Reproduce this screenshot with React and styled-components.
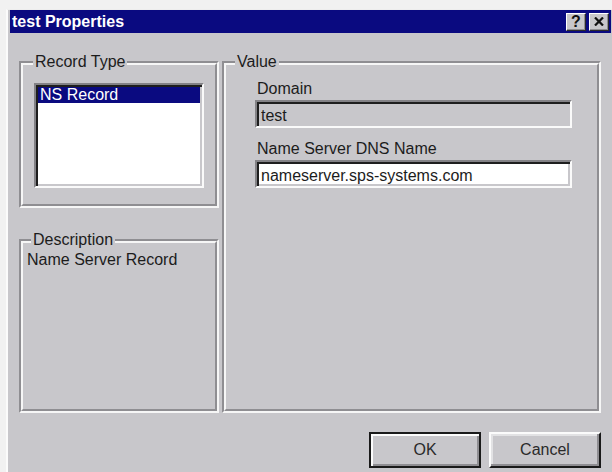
import React from "react";
import styled, { createGlobalStyle } from "styled-components";

const FACE = "#c8c7cb";
const SHADOW = "#8f8e92";
const LIGHT = "#f6f6f6";
const DARK = "#1c1c1c";
const NAVY = "#0a0a80";

const Global = createGlobalStyle`
  html, body {
    margin: 0;
    padding: 0;
    background: #f1f1f1;
    overflow: hidden;
  }
  body {
    font-family: "Liberation Sans", Arial, sans-serif;
    font-size: 16px;
    color: ${DARK};
  }
  * { box-sizing: border-box; }
`;

const Window = styled.div`
  margin: 9px 0 0 6px;
  width: 606px;
  height: 463px;
  background: ${FACE};
  border-top: 1px solid #ededed;
  border-left: 2px solid #fbfbfb;
  padding-left: 2px;
  display: flex;
  flex-direction: column;
`;

const TitleBar = styled.div`
  height: 23px;
  margin-right: 1px;
  background: ${NAVY};
  color: #fff;
  display: flex;
  align-items: center;
  padding: 0 2px 0 2px;
`;

const TitleText = styled.span`
  flex: 1;
  font-weight: bold;
  font-size: 16px;
  line-height: 18px;
  padding-top: 1px;
`;

const CaptionButton = styled.button`
  width: 20px;
  height: 18px;
  margin-left: ${(p) => (p.$gap ? "3px" : "0")};
  padding: 0;
  background: ${FACE};
  border: 1px solid;
  border-color: #fff #2a2a2a #2a2a2a #fff;
  box-shadow: inset -1px -1px 0 ${SHADOW};
  display: flex;
  align-items: center;
  justify-content: center;
  font-family: "Liberation Sans", Arial, sans-serif;
  font-weight: bold;
  font-size: 16px;
  color: #111;
  line-height: 1;
`;

const Body = styled.div`
  display: grid;
  grid-template-columns: 200px 379px;
  column-gap: 3px;
  row-gap: 19px;
  padding: 28px 0 0 9px;
`;

const Column = styled.div`
  display: flex;
  flex-direction: column;
  gap: 31px;
`;

const Group = styled.div`
  border: 2px solid;
  border-color: ${SHADOW} ${LIGHT} ${LIGHT} ${SHADOW};
  height: ${(p) => (p.$h ? `${p.$h}px` : "auto")};
  flex: ${(p) => (p.$grow ? 1 : "none")};
`;

const GroupInner = styled.div`
  height: 100%;
  border: 2px solid;
  border-color: ${LIGHT} ${SHADOW} ${SHADOW} ${LIGHT};
  display: flex;
  flex-direction: column;
  padding: 0 ${(p) => p.$pr || 0}px 0 ${(p) => p.$pl || 0}px;
`;

/* Group caption sits on the top edge; its left margin is measured from the content edge */
const Caption = styled.span`
  align-self: flex-start;
  margin: -12px 0 0 ${(p) => p.$ml || 0}px;
  padding: 0 2px;
  background: ${FACE};
  line-height: 18px;
  white-space: nowrap;
`;

const sunken = `
  border: 2px solid;
  border-color: #838286 #fafafa #fafafa #838286;
  box-shadow: inset 2px 2px 0 #1e1e1e, inset -2px -2px 0 ${FACE};
`;

const ListBox = styled.ul`
  ${sunken}
  list-style: none;
  margin: 12px 0 0 0;
  padding: 2px;
  height: 105px;
  background: #fff;
`;

const ListItem = styled.li`
  height: 16px;
  line-height: 16px;
  padding-left: 2px;
  background: ${(p) => (p.$selected ? NAVY : "transparent")};
  color: ${(p) => (p.$selected ? "#fff" : DARK)};
`;

const DescText = styled.div`
  margin: 2px 0 0 0;
  line-height: 18px;
`;

const FieldLabel = styled.label`
  display: block;
  line-height: 18px;
  margin: ${(p) => p.$mt}px 0 0 2px;
`;

const TextBox = styled.input`
  ${sunken}
  display: block;
  width: 317px;
  height: 28px;
  margin: 2px 0 0 0;
  padding: 4px 4px 0 4px;
  font: inherit;
  font-size: 16px;
  color: ${DARK};
  background: ${(p) => (p.readOnly ? FACE : "#fff")};
  outline: none;
`;

const ButtonRow = styled.div`
  grid-column: 1 / -1;
  display: flex;
  justify-content: flex-end;
  gap: 8px;
`;

const PushButton = styled.button`
  width: 112px;
  height: 36px;
  font-family: "Liberation Sans", Arial, sans-serif;
  font-size: 16px;
  color: #2a2a2a;
  background: ${FACE};
  border: 2px solid;
  border-color: ${(p) =>
    p.$default ? "#1a1a1a" : `#fbfbfb #1a1a1a #1a1a1a #fbfbfb`};
  box-shadow: ${(p) =>
    p.$default
      ? `inset 2px 2px 0 #fbfbfb, inset -2px -2px 0 ${SHADOW}`
      : `inset -2px -2px 0 ${SHADOW}, inset 2px 2px 0 #e2e2e4`};
  padding: 0;
`;

function CloseGlyph() {
  return (
    <svg width="10" height="9" viewBox="0 0 10 9">
      <path
        d="M1 0.5 L9 8.5 M9 0.5 L1 8.5"
        stroke="#111"
        strokeWidth="2.2"
        fill="none"
      />
    </svg>
  );
}

export default function App() {
  return (
    <>
      <Global />
      <Window>
        <TitleBar>
          <TitleText>test Properties</TitleText>
          <CaptionButton aria-label="Help">?</CaptionButton>
          <CaptionButton $gap aria-label="Close">
            <CloseGlyph />
          </CaptionButton>
        </TitleBar>
        <Body>
          <Column>
            <Group $h={147}>
              <GroupInner $pl={11} $pr={11}>
                <Caption $ml={-1}>Record Type</Caption>
                <ListBox>
                  <ListItem $selected>NS Record</ListItem>
                </ListBox>
              </GroupInner>
            </Group>
            <Group $grow>
              <GroupInner $pl={4} $pr={4}>
                <Caption $ml={4}>Description</Caption>
                <DescText>Name Server Record</DescText>
              </GroupInner>
            </Group>
          </Column>
          <Group $h={352}>
            <GroupInner $pl={29}>
              <Caption $ml={-20}>Value</Caption>
              <FieldLabel $mt={9}>Domain</FieldLabel>
              <TextBox readOnly value="test" />
              <FieldLabel $mt={12}>Name Server DNS Name</FieldLabel>
              <TextBox value="nameserver.sps-systems.com" onChange={() => {}} />
            </GroupInner>
          </Group>
          <ButtonRow>
            <PushButton $default>OK</PushButton>
            <PushButton>Cancel</PushButton>
          </ButtonRow>
        </Body>
      </Window>
    </>
  );
}
